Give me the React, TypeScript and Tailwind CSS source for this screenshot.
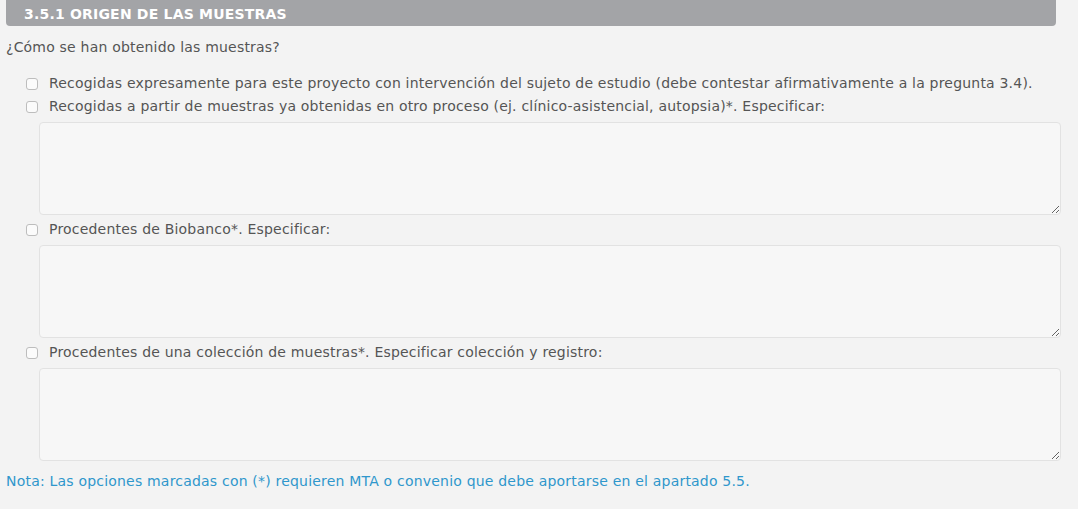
const options = [
  {
    label:
      "Recogidas expresamente para este proyecto con intervención del sujeto de estudio (debe contestar afirmativamente a la pregunta 3.4).",
    detail: false,
  },
  {
    label:
      "Recogidas a partir de muestras ya obtenidas en otro proceso (ej. clínico-asistencial, autopsia)*. Especificar:",
    detail: true,
  },
  { label: "Procedentes de Biobanco*. Especificar:", detail: true },
  {
    label: "Procedentes de una colección de muestras*. Especificar colección y registro:",
    detail: true,
  },
];

export default function App() {
  return (
    <div className="min-h-[509px] bg-[#f3f3f3] text-[14px] tracking-[0.2px] text-[#555] font-['DejaVu_Sans',sans-serif]">
      <div className="ml-[6px] w-[1050px] h-[26px] rounded-b-[4px] bg-[#a3a4a7] pl-[18px] text-[14px] font-bold leading-[28px] text-white">
        3.5.1 ORIGEN DE LAS MUESTRAS
      </div>

      <p className="mt-[10px] pl-[6px] leading-[22px]">¿Cómo se han obtenido las muestras?</p>

      <div className="mt-[14px]">
        {options.map((o, i) => (
          <div key={i} className={i > 1 ? "mt-[3px]" : ""}>
            <label className="flex h-[23px] items-center pl-[26px]">
              <input
                type="checkbox"
                className="m-0 h-[12px] w-[12px] shrink-0 appearance-none rounded-[3px] border border-[#bdbdbd] bg-[#fbfbfb]"
              />
              <span className="ml-[11px]">{o.label}</span>
            </label>
            {o.detail && (
              <textarea className="mt-[4px] ml-[39px] block h-[93px] w-[1022px] resize-y rounded-[4px] border border-[#e2e2e2] bg-[#f7f7f7] outline-none" />
            )}
          </div>
        ))}
      </div>

      <p className="mt-[10px] pl-[6px] leading-[21px] text-[#2f97cc]">
        Nota: Las opciones marcadas con (*) requieren MTA o convenio que debe aportarse en el apartado 5.5.
      </p>
    </div>
  );
}
